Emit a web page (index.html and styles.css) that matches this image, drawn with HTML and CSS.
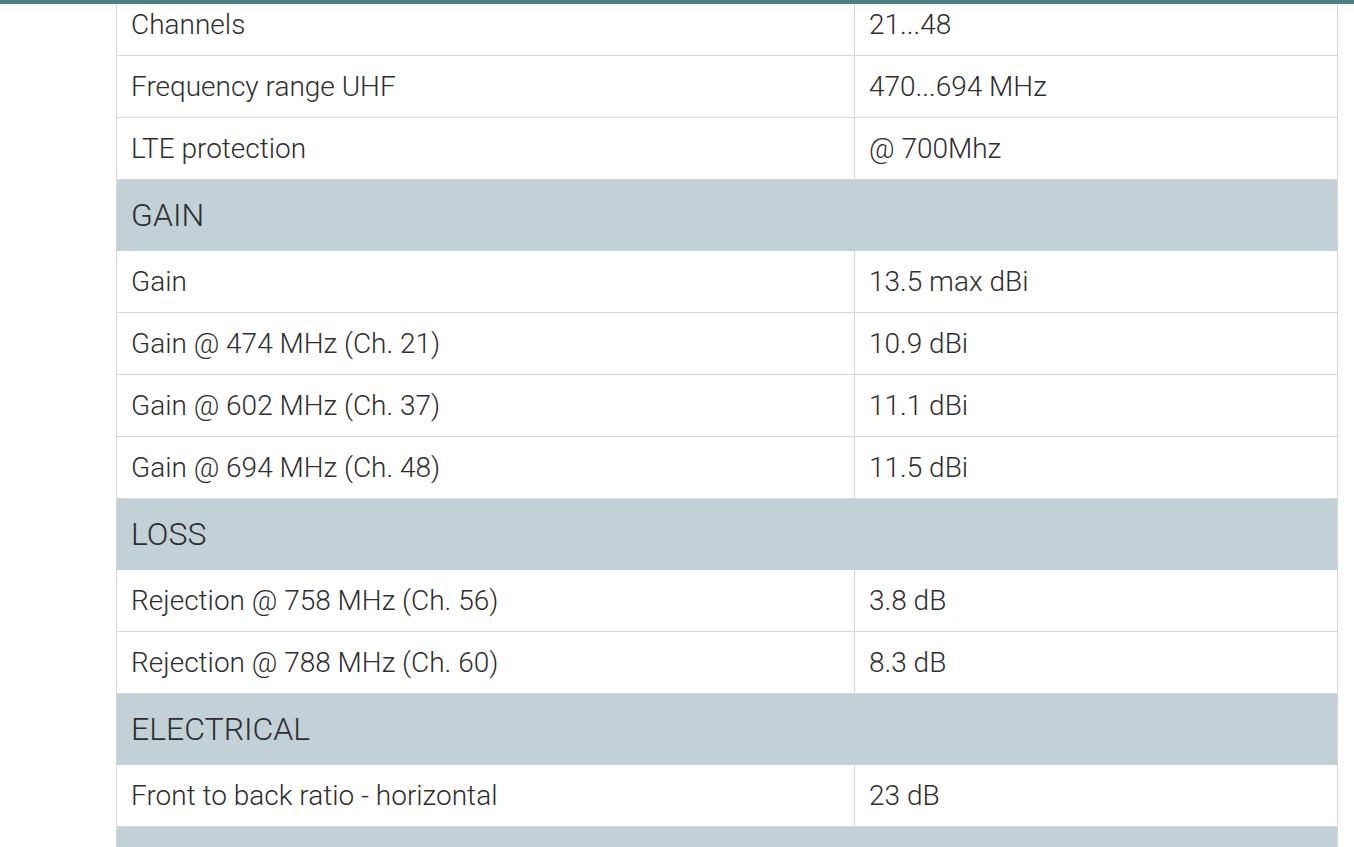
FILE: index.html
```html
<!DOCTYPE html>
<html>
<head>
<meta charset="utf-8">
<link rel="stylesheet" href="styles.css">
</head>
<body>
<div class="topbar"></div>
<div class="page">
<table class="specs">
<tr><td class="k">Channels</td><td class="v">21...48</td></tr>
<tr><td class="k">Frequency range UHF</td><td class="v">470...694 MHz</td></tr>
<tr><td class="k">LTE protection</td><td class="v">@ 700Mhz</td></tr>
<tr class="sec"><td colspan="2">GAIN</td></tr>
<tr><td class="k">Gain</td><td class="v">13.5 max dBi</td></tr>
<tr><td class="k">Gain @ 474 MHz (Ch. 21)</td><td class="v">10.9 dBi</td></tr>
<tr><td class="k">Gain @ 602 MHz (Ch. 37)</td><td class="v">11.1 dBi</td></tr>
<tr><td class="k">Gain @ 694 MHz (Ch. 48)</td><td class="v">11.5 dBi</td></tr>
<tr class="sec"><td colspan="2">LOSS</td></tr>
<tr><td class="k">Rejection @ 758 MHz (Ch. 56)</td><td class="v">3.8 dB</td></tr>
<tr><td class="k">Rejection @ 788 MHz (Ch. 60)</td><td class="v">8.3 dB</td></tr>
<tr class="sec"><td colspan="2">ELECTRICAL</td></tr>
<tr><td class="k">Front to back ratio - horizontal</td><td class="v">23 dB</td></tr>
<tr class="sec"><td colspan="2">&nbsp;</td></tr>
</table>
</div>
</body>
</html>
```
FILE: styles.css
```css
html, body {
  margin: 0;
  padding: 0;
  background: #fff;
  overflow: hidden;
}
body {
  font-family: Roboto, "Liberation Sans", sans-serif;
  font-weight: 300;
  color: #2e2e2e;
}
.topbar {
  position: fixed;
  top: 0;
  left: 0;
  right: 0;
  height: 4px;
  background: #4e7e88;
  z-index: 2;
}
.page {
  padding-left: 116px;
  padding-right: 16px;
  margin-top: -7px;
}
.specs {
  width: 1222px;
  border-collapse: collapse;
  table-layout: fixed;
}
.specs td {
  border: 1px solid #d7d7d7;
  height: 62px;
  padding: 0 15px 0 14px;
  font-size: 28px;
  line-height: 32px;
  vertical-align: middle;
  box-sizing: border-box;
}
.specs td.k {
  width: 738px;
}
.specs tr.sec td {
  background: #c2d1d5;
  height: 71px;
  font-size: 32px;
  padding-top: 0;
  border-color: #c2d1d5;
  border-left-color: #d7d7d7;
  border-right-color: #d7d7d7;
}
```
